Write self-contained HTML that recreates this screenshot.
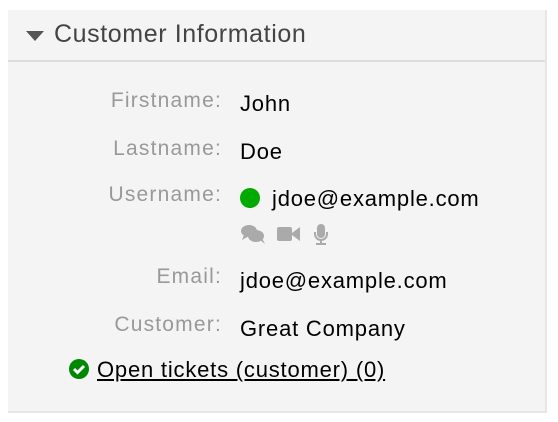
<!DOCTYPE html>
<html><head><style>
body{margin:0;background:#fff;width:558px;height:422px;overflow:hidden;font-family:"Liberation Sans",Arial,sans-serif;}
.panel{position:absolute;left:8px;top:10px;width:537px;height:401px;background:#f4f4f4;border-right:2px solid #e6e6e6;border-bottom:2px solid #e6e6e6;}
.hdr{position:absolute;left:0;top:0;width:537px;height:50px;border-bottom:2px solid #ddd;}
.tri{position:absolute;left:18px;top:21px;width:0;height:0;border-left:9px solid transparent;border-right:9px solid transparent;border-top:10px solid #555;}
.title{position:absolute;left:46px;top:10px;font-size:25px;letter-spacing:0.6px;color:#444;}
.lbl{position:absolute;right:323px;font-size:21px;letter-spacing:1.2px;color:#999;white-space:nowrap;}
.val{position:absolute;left:232px;font-size:22px;letter-spacing:0.8px;color:#000;white-space:nowrap;}
</style></head><body>
<div class="panel">
<div class="hdr"><div class="tri"></div><div class="title">Customer Information</div></div>
<div class="lbl" style="top:79px">Firstname:</div><div class="val" style="top:81px">John</div>
<div class="lbl" style="top:127px">Lastname:</div><div class="val" style="top:129px">Doe</div>
<div class="lbl" style="top:173px">Username:</div>
<div style="position:absolute;left:232px;top:178px;width:20px;height:20px;border-radius:50%;background:#0a0;"></div>
<div class="val" style="top:176px;left:264px">jdoe@example.com</div>
<svg style="position:absolute;left:232px;top:212px" width="100" height="24" viewBox="0 0 100 24">
<g fill="#aaa">
<ellipse cx="9" cy="9" rx="8" ry="6"/><path d="M4 13 L2 18 L9 14Z"/>
<ellipse cx="16" cy="14" rx="8" ry="6"/><path d="M20 18 L25 22 L22 16Z"/>
<rect x="37" y="5" width="15" height="14" rx="2"/><path d="M52 11 L60 5 L60 19 L52 13Z"/>
<rect x="77" y="2" width="8" height="14" rx="4"/>
<path d="M74 10 v2 a7 7 0 0 0 14 0 v-2 h-2 v2 a5 5 0 0 1 -10 0 v-2Z"/>
<rect x="80" y="18" width="2" height="4"/><rect x="76" y="21" width="10" height="2"/>
</g></svg>
<div class="lbl" style="top:255px">Email:</div><div class="val" style="top:258px">jdoe@example.com</div>
<div class="lbl" style="top:303px">Customer:</div><div class="val" style="top:306px">Great Company</div>
<svg style="position:absolute;left:61px;top:349px" width="20" height="20" viewBox="0 0 20 20"><circle cx="10" cy="10" r="10" fill="#080"/><path d="M5 10 L8.5 13.5 L15 7" stroke="#fff" stroke-width="3" fill="none"/></svg>
<div class="val" style="left:89px;top:347px;text-decoration:underline;">Open tickets (customer) (0)</div>
</div>
</body></html>
